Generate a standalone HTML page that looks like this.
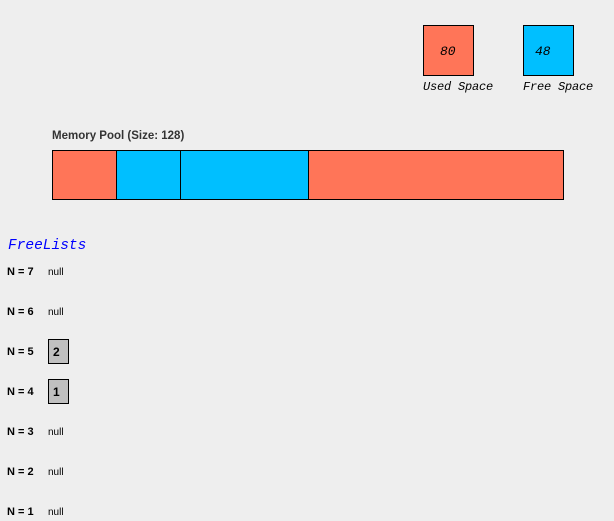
<!DOCTYPE html><html><head><style>
body{margin:0;width:614px;height:521px;background:#eeeeee;position:relative;overflow:hidden;font-family:"Liberation Sans",sans-serif}
.a{position:absolute}
.m{font-family:"Liberation Mono",monospace;font-style:italic;font-size:12px}
.b{border:1px solid #000;box-sizing:border-box}
.n{font-weight:bold;font-size:11px;left:7px}
.nl{font-size:10px;left:48px}
.bx{left:48px;width:21px;height:25px;background:#c0c0c0;font-weight:bold;font-size:12px;padding:5px 0 0 4px}
</style></head><body>
<div class="a b m" style="left:423px;top:25px;width:51px;height:51px;background:#ff7558;padding:18px 0 0 16px;font-size:13px">80</div>
<div class="a b m" style="left:523px;top:25px;width:51px;height:51px;background:#00bfff;padding:18px 0 0 11px;font-size:13px">48</div>
<div class="a m" style="left:423px;top:80px;font-size:12px;letter-spacing:-0.2px">Used Space</div>
<div class="a m" style="left:523px;top:80px;font-size:12px;letter-spacing:-0.2px">Free Space</div>
<div class="a" style="left:52px;top:130px;font-size:11.5px;font-weight:bold;color:#333">Memory Pool (Size: 128)</div>
<div class="a b" style="left:52px;top:150px;width:65px;height:50px;background:#ff7558"></div>
<div class="a b" style="left:116px;top:150px;width:65px;height:50px;background:#00bfff"></div>
<div class="a b" style="left:180px;top:150px;width:129px;height:50px;background:#00bfff"></div>
<div class="a b" style="left:308px;top:150px;width:256px;height:50px;background:#ff7558"></div>
<div class="a m" style="left:8px;top:238px;font-size:14.5px;color:#0000ff">FreeLists</div>
<div class="a n" style="top:266px">N = 7</div><div class="a nl" style="top:267px">null</div>
<div class="a n" style="top:306px">N = 6</div><div class="a nl" style="top:307px">null</div>
<div class="a n" style="top:346px">N = 5</div><div class="a b bx" style="top:339px">2</div>
<div class="a n" style="top:386px">N = 4</div><div class="a b bx" style="top:379px">1</div>
<div class="a n" style="top:426px">N = 3</div><div class="a nl" style="top:427px">null</div>
<div class="a n" style="top:466px">N = 2</div><div class="a nl" style="top:467px">null</div>
<div class="a n" style="top:506px">N = 1</div><div class="a nl" style="top:507px">null</div>
</body></html>
